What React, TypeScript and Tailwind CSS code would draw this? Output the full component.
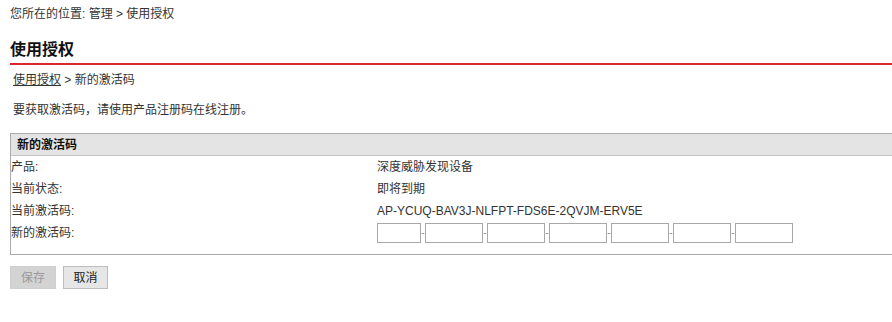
import React from 'react';

const rows = [
  { label: '产品:', value: '深度威胁发现设备' },
  { label: '当前状态:', value: '即将到期' },
  { label: '当前激活码:', value: 'AP-YCUQ-BAV3J-NLFPT-FDS6E-2QVJM-ERV5E' },
];

const codeWidths = ['w-[44px]', 'w-[58px]', 'w-[58px]', 'w-[58px]', 'w-[58px]', 'w-[58px]', 'w-[58px]'];

export default function App() {
  return (
    <div className="min-h-[322px] w-[892px] overflow-hidden bg-white pt-[7px] pl-[10px] text-[12px] text-[#333] font-['Liberation_Sans','Noto_Sans_CJK_SC',sans-serif]">
      {/* breadcrumb */}
      <div className="h-[14px] leading-[14px]">您所在的位置: 管理 &gt; 使用授权</div>

      {/* title */}
      <div className="-mr-[4px] mt-[19px] border-b-2 border-[#da262e] pb-[3px] text-[16px] font-bold leading-[20px] text-[#111]">
        使用授权
      </div>

      <div className="mt-[8px] ml-[3px] leading-[14px]">
        <span className="underline">使用授权</span> &gt; 新的激活码
      </div>

      <div className="mt-[16px] ml-[3px] leading-[14px]">要获取激活码，请使用产品注册码在线注册。</div>

      {/* panel */}
      <div className="-mr-[4px] mt-[16px] border border-[#ababab] pb-[10px]">
        <div className="h-[22px] border-b border-[#c4c4c4] bg-[#e4e4e4] pl-[6px] font-bold leading-[22px] text-[#111]">
          新的激活码
        </div>
        {rows.map((r) => (
          <div key={r.label} className="flex h-[22px] items-center">
            <div className="w-[366px]">{r.label}</div>
            <div>{r.value}</div>
          </div>
        ))}
        <div className="flex h-[22px] items-center">
          <div className="w-[366px]">新的激活码:</div>
          <div className="flex items-center">
            {codeWidths.map((w, i) => (
              <React.Fragment key={i}>
                {i > 0 && <span className="w-[4px] text-center text-[10px] leading-[20px] text-[#888]">-</span>}
                <input className={`${w} h-[20px] border border-[#a8a8a8] bg-white outline-none`} />
              </React.Fragment>
            ))}
          </div>
        </div>
      </div>

      {/* buttons */}
      <div className="mt-[11px] flex gap-[7px]">
        <button disabled className="h-[23px] w-[46px] border border-[#cfcfcf] bg-[#d3d3d3] text-[12px] text-[#9a9a9a]">
          保存
        </button>
        <button className="h-[23px] w-[45px] border border-[#bdbdbd] bg-[#e6e6e6] text-[12px] text-[#222]">
          取消
        </button>
      </div>
    </div>
  );
}
